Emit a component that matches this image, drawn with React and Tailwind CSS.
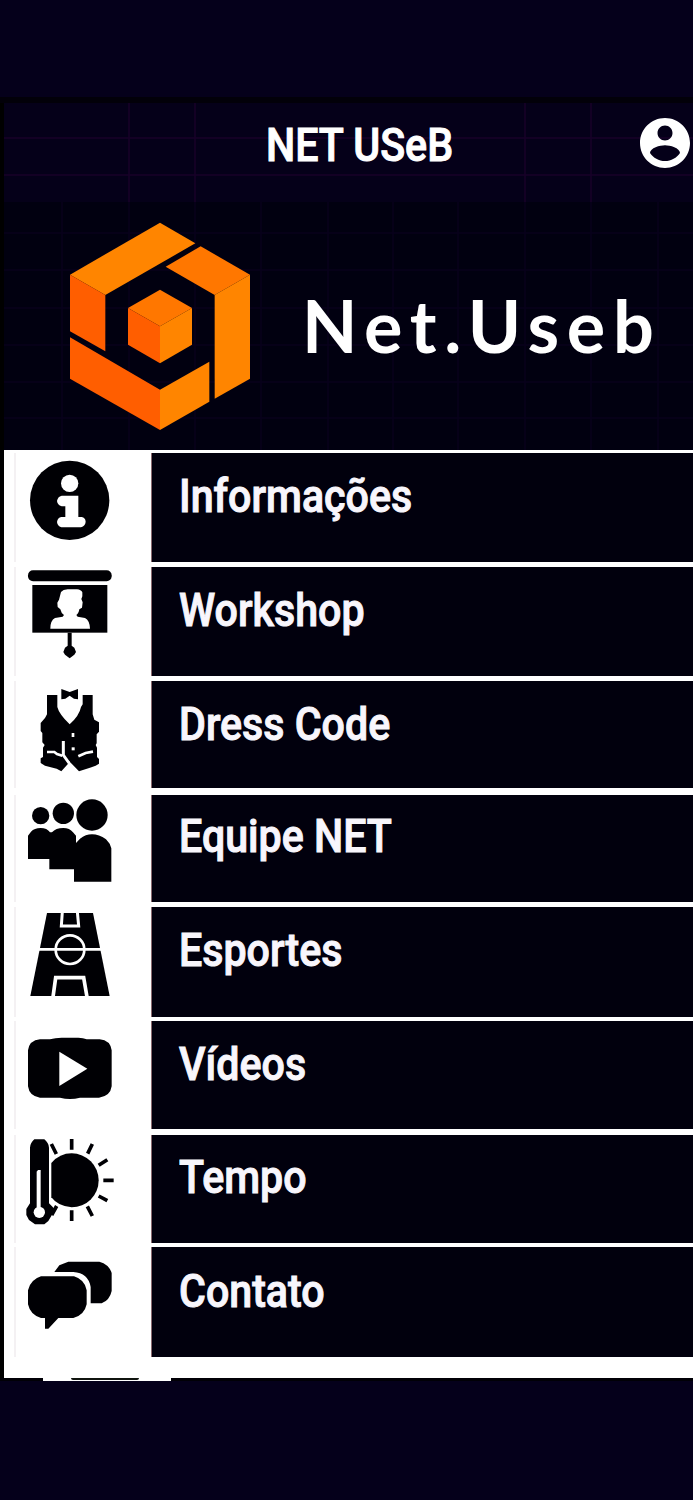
const ORANGE = "#ff8500";
const ORANGE_MID = "#ff7700";
const ORANGE_DARK = "#ff5e00";

function Logo() {
  return (
    <svg viewBox="210 66 540 627" className="h-[209px] w-[180px] shrink-0">
      <path fill={ORANGE} d="M480 68 586 130 316 285 210 224Z" />
      <path fill={ORANGE_DARK} d="M210 224 316 285V454L210 394Z" />
      <path fill={ORANGE_MID} d="M602 139 750 224 644 285 497 200Z" />
      <path fill={ORANGE} d="M750 224V536L644 596V285Z" />
      <path fill={ORANGE_DARK} d="M210 412 480 569V690L210 536Z" />
      <path fill={ORANGE} d="M480 569 628 485V605L480 690Z" />
      {/* cubo central */}
      <path fill={ORANGE_MID} d="M480 269 576 324 480 379 384 324Z" />
      <path fill={ORANGE_DARK} d="M384 324 480 379V490L384 434Z" />
      <path fill={ORANGE} d="M576 324V434L480 490V379Z" />
    </svg>
  );
}

function InfoIcon() {
  return (
    <>
      <circle cx="134" cy="142" r="119" />
      <g fill="#fff">
        <circle cx="134" cy="91" r="26" />
        <path d="M110 128H160V192H170Q181 194 182 206 181 219 168 223H109Q97 219 96 207 98 194 109 192H121V160H110Q97 156 96 144 98 131 110 128Z" />
      </g>
    </>
  );
}

function WorkshopIcon() {
  return (
    <>
      <rect x="9" y="10" width="251" height="33" rx="15" />
      <rect x="22" y="54" width="225" height="143" />
      <path
        fill="#fff"
        d="M108 75Q114 68 128 67H156Q168 68 172 76V88L169 96 173 106 171 122 163 127Q161 140 154 144L158 149 180 153Q194 160 195 185H76Q76 160 90 153L113 149 117 144Q108 138 106 127L98 120 97 107 102 98Z"
      />
      <path d="M128 197H140V236L148 242 153 255 148 263 134 274 120 263 115 255 120 242 128 236Z" />
    </>
  );
}

function DressIcon() {
  return (
    <>
      <path d="M109 24 134 33 159 24V55L147 53 134 44 121 53 109 55Z" />
      <path d="M66 42H97V78Q102 99 134 130 163 104 168 78L173 70V42H203V100L208 116 222 124V152L215 160V187L212 192 216 200V228L222 234V248L212 254 195 260 162 271 132 240 128 250 109 271 95 263 60 254 47 246V232L54 228V200L59 192 52 184V156L47 150V126L60 111 66 100Z" />
      <g fill="none" stroke="#fff" strokeWidth="9">
        <path d="M115 180V222L132 246" />
        <path d="M66 213H88L96 219 112 224" strokeWidth="8" />
        <path d="M160 226 182 216 204 212" strokeWidth="8" />
      </g>
      <rect x="140" y="156" width="8" height="12" fill="#fff" />
      <rect x="140" y="199" width="9" height="9" fill="#fff" />
    </>
  );
}

function TeamIcon() {
  return (
    <>
      <circle cx="47" cy="62" r="26" />
      <circle cx="115" cy="55" r="32" />
      <circle cx="201" cy="60" r="47" />
      <path d="M9 192V122L18 110Q28 99 47 99 66 99 75 112H81Q92 99 115 99 134 99 144 112L153 122V144L165 131Q182 118 201 118 222 118 243 133L254 146 259 160V260H147V223H73V192Z" />
    </>
  );
}

function CourtIcon() {
  return (
    <>
      <path d="M66 18H204L254 267H16Z" />
      <g fill="none" stroke="#fff" strokeWidth="8">
        <path d="M112 14 109 57H161L157 14" strokeWidth="9" />
        <path d="M40 127H230" />
        <circle cx="135" cy="128" r="43" />
        <path d="M84 270 92 212H176L186 270" strokeWidth="11" />
      </g>
    </>
  );
}

function VideoIcon() {
  return (
    <>
      <path d="M45 55H75Q90 50 110 50H160Q175 50 185 55H224Q256 58 260 88V196Q256 226 222 230H165Q135 238 105 230H45Q13 226 9 196V88Q13 58 45 55Z" />
      <path fill="#fff" d="M103 92 187 143 103 195Z" />
    </>
  );
}

function WeatherIcon() {
  return (
    <>
      <path d="M79 84Q104 55 140 55A81 81 0 0 1 140 217Q99 214 79 187Z" />
      <path d="M15 205V38Q15 25 28 13H58Q72 25 72 38V205L81 214 90 224 70 258 58 268H30L12 255 4 240V222Z" />
      <path
        fill="none"
        stroke="#000004"
        strokeWidth="11"
        d="M140 12V44M202 27 188 56M247 74 221 91M235 136H266M221 183 247 197M187 214 202 243M140 226V258M79 27 94 57M95 213 80 240"
      />
      <path d="M35 220V110L39 105H47V220Z" fill="#fff" />
      <circle cx="43" cy="232" r="17" fill="#fff" />
    </>
  );
}

function ChatIcon() {
  return (
    <>
      <path d="M88 75 103 55 130 44H223Q252 52 260 78V132Q254 160 230 169H197V120Q190 78 145 75Z" />
      <path d="M48 88H147Q180 98 185 130V172Q178 205 145 213H100L70 245H60V213H48Q16 204 9 172V130Q16 98 48 88Z" />
    </>
  );
}

const items = [
  { label: "Informações", Icon: InfoIcon, row: "h-[109px] mb-[5px]", pad: "pt-5" },
  { label: "Workshop", Icon: WorkshopIcon, row: "h-[109px] mb-[5px]", pad: "pt-5" },
  { label: "Dress Code", Icon: DressIcon, row: "h-[107px] mb-[7px]", pad: "pt-5" },
  { label: "Equipe NET", Icon: TeamIcon, row: "h-[107px] mb-[5px]", pad: "pt-[18px]" },
  { label: "Esportes", Icon: CourtIcon, row: "h-[110px] mb-1", pad: "pt-5" },
  { label: "Vídeos", Icon: VideoIcon, row: "h-[108px] mb-1.5", pad: "pt-5" },
  { label: "Tempo", Icon: WeatherIcon, row: "h-[108px] mb-1", pad: "pt-[19px]" },
  { label: "Contato", Icon: ChatIcon, row: "h-[110px]", pad: "pt-[21px]" },
];

function MenuItem({ label, Icon, row, pad }) {
  return (
    <li className={`flex ${row}`}>
      <div className="ml-2.5 w-[137px] shrink-0 border-l-2 border-[#f4f1f3] pl-[9px]">
        <svg viewBox="0 0 270 327" className="h-[109px] w-[90px]" fill="#000004">
          <Icon />
        </svg>
      </div>
      <a
        href="#"
        className={`flex-1 border-l border-[#8a6a70] bg-[#01000d] pl-[27px] text-[46px] leading-none font-medium text-[#f8f6fc] ${pad}`}
      >
        <span className="inline-block origin-left scale-x-[0.895] [-webkit-text-stroke:1px]">
          {label}
        </span>
      </a>
    </li>
  );
}

// linhas da grade de fundo
function Grid({ height, cols, rows, color }) {
  return (
    <svg
      className="absolute inset-0 h-full w-full"
      viewBox={`0 0 689 ${height}`}
      stroke={color}
      strokeWidth="1.5"
    >
      {cols.map((x) => (
        <path key={x} d={`M${x} 0V${height}`} />
      ))}
      {rows.map((y) => (
        <path key={y} d={`M0 ${y}H689`} />
      ))}
    </svg>
  );
}

export default function App() {
  return (
    <div className="h-[1500px] w-full overflow-hidden bg-[#05001b] pt-[97px] font-[Roboto,sans-serif]">
      <div className="h-1.5 bg-[#020009]" />
      <div className="border-l-4 border-black">
        <header className="relative flex h-[99px] items-start bg-[#050019]">
          <Grid
            height={99}
            cols={[125, 191, 521, 587]}
            rows={[35, 72]}
            color="#190028"
          />
          <h1 className="relative flex-1 pt-[19px] pl-[262px] text-[46px] leading-none font-medium text-white">
            <span className="inline-block origin-left scale-x-[0.895] [-webkit-text-stroke:1px]">
              NET USeB
            </span>
          </h1>
          <svg viewBox="2 2 20 20" className="relative mt-[15px] mr-[3px] size-[50px]" fill="#fff">
            <path d="M12 2C6.48 2 2 6.48 2 12s4.48 10 10 10 10-4.48 10-10S17.52 2 12 2zm0 3c1.66 0 3 1.34 3 3s-1.34 3-3 3-3-1.34-3-3 1.34-3 3-3zm0 14.2c-2.5 0-4.71-1.28-6-3.22.03-1.99 4-3.08 6-3.08 1.99 0 5.97 1.09 6 3.08-1.29 1.94-3.5 3.22-6 3.22z" />
          </svg>
        </header>

        <section className="relative flex h-[248px] items-start bg-[#010010] pt-5 pl-[66px]">
          <Grid
            height={248}
            cols={[58, 125, 191, 257, 324, 389, 454, 521, 587, 654]}
            rows={[31, 68, 106, 143, 180, 216]}
            color="#08001b"
          />
          <div className="relative flex">
            <Logo />
            <p className="mt-[67px] ml-[52px] font-[Lato,sans-serif] text-[72px] leading-none font-bold tracking-[7.7px] text-white">
              Net.Useb
            </p>
          </div>
        </section>

        <ul className="bg-white pt-[3px] pb-[21px]">
          {items.map((item) => (
            <MenuItem key={item.label} {...item} />
          ))}
        </ul>
      </div>

      {/* topo do próximo item */}
      <div className="flex h-[3px] bg-[#010006] pl-[43px]">
        <div className="flex w-32 bg-white pl-7">
          <div className="h-0.5 w-17 rounded-b-full bg-[#10140f]" />
        </div>
      </div>
    </div>
  );
}
